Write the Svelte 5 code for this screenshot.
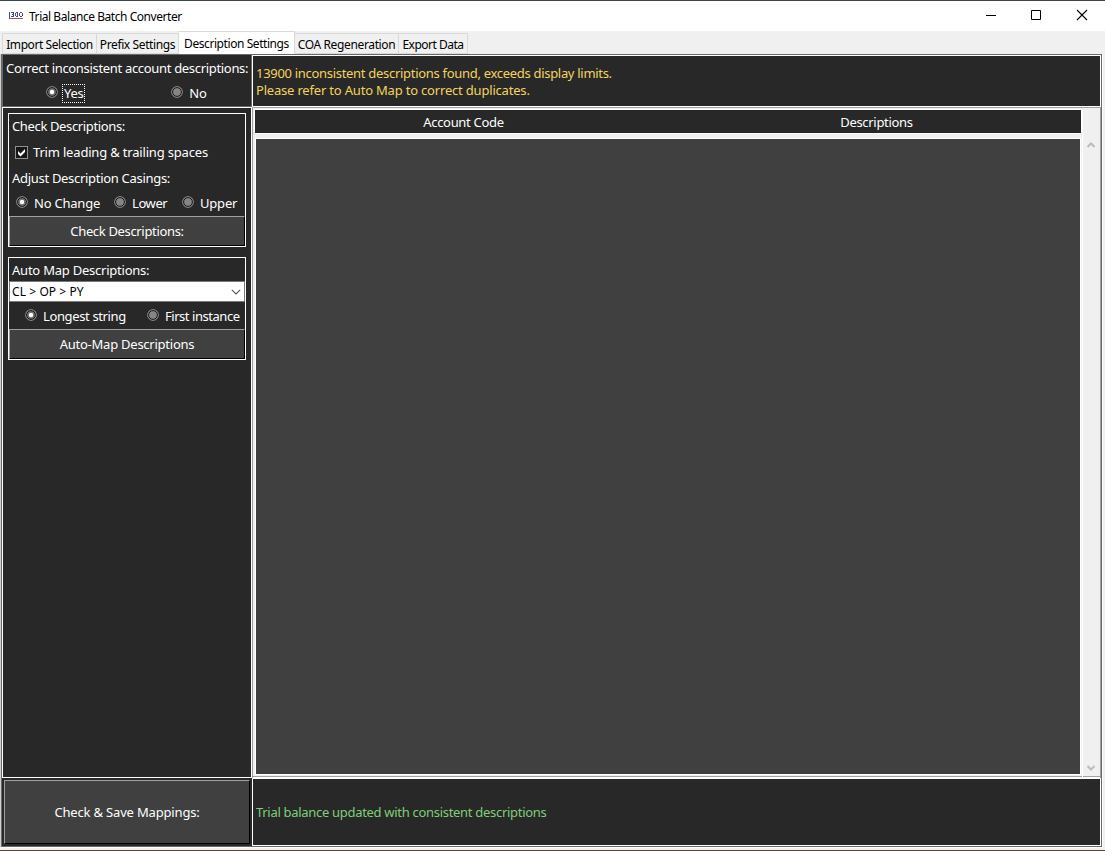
<script>
  const tabs = [
    { label: 'Import Selection', width: 95, spacing: -0.43 },
    { label: 'Prefix Settings', width: 82, spacing: -0.38 },
    { label: 'Description Settings', width: 116, spacing: -0.43 },
    { label: 'COA Regeneration', width: 104, spacing: -0.36 },
    { label: 'Export Data', width: 69, spacing: -0.5 },
  ];
  let active = $state(2);
  let correct = $state('Yes');
  let casing = $state('No Change');
  let method = $state('Longest string');
  let trim = $state(true);
</script>

{#snippet radio(label, on, pick, cls)}
  <button class="radio {cls}" onclick={pick}>
    <svg width="12" height="12" viewBox="0 0 12 12">
      <circle cx="6" cy="6" r="5.4" fill="#808080" stroke="#8c8c8c" stroke-width=".9" />
      <circle cx="6" cy="6" r="4.4" fill={on ? '#6f6f6f' : '#858585'} stroke="#181818" stroke-width="1" />
      {#if on}<circle cx="6" cy="6" r="2.2" fill="#fff" />{/if}
    </svg>
    <span>{label}</span>
  </button>
{/snippet}

<div class="window">
  <header>
    <svg class="logo" width="14" height="7" viewBox="0 0 14 7" fill="none" shape-rendering="crispEdges">
      <path d="M.5 0v6M2 .5h3M3 2.500h2M2 4.500h3M4.500 0v5M6.500 1v3M7 .5h2M7 4.500h2M8.500 1v4M10.500 1v3M11 .5h2M11 4.500h2M13.500 1v3" stroke="#454d94" />
      <path d="M0 6.500h14" stroke="#b24a55" />
    </svg>
    <h1><span>Trial Balance Batch Converter</span></h1>
    <svg class="controls" width="102" height="12" viewBox="0 0 102 12" fill="none" stroke="#000">
      <path d="M0 6.500h10M45.500 1.500h9v9h-9z" />
      <path d="M91 1l10 10M101 1l-10 10" stroke-width="1.1" />
    </svg>
  </header>

  <nav>
    {#each tabs as tab, i}
      <button class="tab" class:active={active === i} style:width="{tab.width}px" style:letter-spacing="{tab.spacing}px" onclick={() => (active = i)}><span>{tab.label}</span></button>
    {/each}
  </nav>

  <main>
    <section class="question">
      <p><span>Correct inconsistent account descriptions:</span></p>
      <div class="answers">
        {@render radio('Yes', correct === 'Yes', () => (correct = 'Yes'), 'focus')}
        {@render radio('No', correct === 'No', () => (correct = 'No'), '')}
      </div>
    </section>
    <section class="notice">
      <span class="n1">13900 inconsistent descriptions found, exceeds display limits.</span>
      <span class="n2">Please refer to Auto Map to correct duplicates.</span>
    </section>

    <aside>
      <div class="group check">
        <p class="l1"><span>Check Descriptions:</span></p>
        <button class="tick" onclick={() => (trim = !trim)}>
          <svg width="13" height="13" viewBox="0 0 13 13">
            <path d="M0 0h13v13H0z" fill="#909090" />
            <path d="M1 1h11v11H1z" fill="#161616" />
            {#if trim}<path d="M3 5v3l2.500 2.500L10 6V3L5.500 7.500z" fill="#fff" />{/if}
          </svg>
          <span>Trim leading &amp; trailing spaces</span>
        </button>
        <p class="l2"><span>Adjust Description Casings:</span></p>
        <div class="casings">
          {@render radio('No Change', casing === 'No Change', () => (casing = 'No Change'), 'c1')}
          {@render radio('Lower', casing === 'Lower', () => (casing = 'Lower'), 'c2')}
          {@render radio('Upper', casing === 'Upper', () => (casing = 'Upper'), 'c3')}
        </div>
        <button class="push"><span>Check Descriptions:</span></button>
      </div>
      <div class="group map">
        <p class="l3"><span>Auto Map Descriptions:</span></p>
        <div class="combo">
          <span>CL &gt; OP &gt; PY</span>
          <svg width="10" height="6" viewBox="0 0 10 6" fill="none" stroke="#555" stroke-width="1.1"><path d="M.8.8L5 5 9.200.8" /></svg>
        </div>
        <div class="methods">
          {@render radio('Longest string', method === 'Longest string', () => (method = 'Longest string'), 'm1')}
          {@render radio('First instance', method === 'First instance', () => (method = 'First instance'), 'm2')}
        </div>
        <button class="push auto"><span>Auto-Map Descriptions</span></button>
      </div>
    </aside>

    <section class="table">
      <div class="grid">
        <div class="head"><span>Account Code</span><span>Descriptions</span></div>
        <div class="body"></div>
      </div>
      <div class="scroll">
        <svg width="8" height="6" viewBox="0 0 8 6" fill="none" stroke="#bcbcbc" stroke-width="2"><path d="M.5 5L4 1.500 7.500 5" /></svg>
        <svg width="8" height="6" viewBox="0 0 8 6" fill="none" stroke="#bcbcbc" stroke-width="2"><path d="M.5 1L4 4.500 7.500 1" /></svg>
      </div>
    </section>

    <div class="save"><button class="push"><span>Check &amp; Save Mappings:</span></button></div>
    <section class="status"><span>Trial balance updated with consistent descriptions</span></section>
  </main>
</div>

<style>
  :global(body) { margin: 0; overflow: hidden; }
  .window, .window * { box-sizing: border-box; }
  .window {
    width: 1105px; height: 851px; background: #f0f0f0;
    border-top: 1px solid #3c4646; border-bottom: 1px solid #62403c;
    font: 13px/17px 'Noto Sans', sans-serif; color: #fff; letter-spacing: -.3px;
    display: flex; flex-direction: column; white-space: nowrap;
  }
  button { font: inherit; color: inherit; border: 0; padding: 0; margin: 0; background: none; letter-spacing: inherit; }
  p, h1 { margin: 0; font: inherit; }
  svg { display: block; flex: none; }
  header { height: 30px; flex: none; background: #fff; color: #000; display: flex; align-items: center; padding: 0 17px 0 9px; font-size: 12px; }
  h1 { margin-left: 6px; flex: 1; letter-spacing: -.45px; }
  .logo { margin-bottom: 2px; }
  .controls { margin-bottom: 2px; }
  nav { height: 23px; flex: none; display: flex; align-items: flex-end; padding-left: 2px; color: #000; font-size: 12px; }
  .tab { height: 21px; border: 1px solid #d9d9d9; border-left-width: 0; padding-top: 1px; background: #f0f0f0; }
  .tab:first-child { border-left-width: 1px; }
  .tab.active { height: 23px; background: #fff; padding: 1px 0 0; border-bottom-color: #fff; }
  main {
    width: 1101px; height: 793px; margin-left: 1px; flex: none; background: #fff;
    border: 1px solid #696969; box-shadow: -1px 0 #d0d0d0, 1px 1px #fff;
    display: grid; grid-template: 52px 671px 68px / 250px 849px;
  }
  .question { background: #282828; border-left: 1px solid #696969; border-right: 1px solid #696969; border-bottom: 1px solid #696969; padding: 5px 0 0 3px; }
  .question p { letter-spacing: -.32px; }
  .answers { display: flex; justify-content: space-between; padding: 6px 44.500px 0 40px; }
  .radio { display: flex; align-items: center; gap: 6px; height: 20px; }
  .radio svg { position: relative; top: -1px; }
  .focus { gap: 5px; }
  .focus span { outline: 1px dotted #fff; padding: 0 1px; }
  .notice { background: #282828; border: 1px solid #fff; padding: 9px 3px; color: #f2d45c; display: flex; flex-direction: column; }
  .n1 { letter-spacing: -.3px; }
  .n2 { letter-spacing: -.19px; }
  aside { background: #282828; border: 1px solid #fff; padding: 5px; display: flex; flex-direction: column; gap: 10px; }
  .group { border: 1px solid #fff; width: 238px; display: flex; flex-direction: column; }
  .check { height: 134px; }
  .map { height: 103px; }
  .group p { padding-left: 3px; }
  .l1 { padding-top: 4px; letter-spacing: -.36px; }
  .tick { display: flex; align-items: center; gap: 5px; height: 35px; padding-left: 6px; letter-spacing: -.18px; }
  .casings { display: flex; padding: 6px 7px 0 7px; height: 29px; }
  .c1 { width: 98px; letter-spacing: -.22px; }
  .c2 { width: 68px; letter-spacing: -.4px; }
  .c3 { letter-spacing: -.2px; }
  .push { background: #404040; border: 1px solid; border-color: #a0a0a0 #000 #000 #a0a0a0; width: 236px; height: 30px; flex: none; letter-spacing: -.34px; }
  .push.auto { letter-spacing: -.24px; }
  .l3 { padding-top: 4px; height: 23px; letter-spacing: -.23px; }
  .combo { height: 21px; background: #fff; border: 1px solid #7a7a7a; color: #000; font-size: 12px; letter-spacing: .08px; display: flex; align-items: center; justify-content: space-between; padding: 0 3px 0 2px; }
  .methods { display: flex; padding: 4px 4px 0 16px; height: 27px; letter-spacing: -.37px; }
  .m1 { width: 122px; }
  .m2 { letter-spacing: -.46px; }
  .table { border: 1px solid #a0a0a0; display: flex; background: #f0f0f0; padding: 2px 1px 1px; border-bottom: 0; box-shadow: inset 0 -1px #fff, inset 0 -2px #a0a0a0; }
  .grid { width: 828px; display: flex; flex-direction: column; gap: 6px; padding-left: 1px; }
  .head { width: 826px; height: 23px; background: #282828; box-shadow: 0 0 0 1px #fff; display: grid; grid-template-columns: 417px 409px; place-items: center; padding-top: 1px; }
  .body { width: 824px; height: 635px; margin-left: 1px; background: #404040; box-shadow: 0 0 0 1px #fff; }
  .scroll { flex: 1; display: flex; flex-direction: column; justify-content: space-between; align-items: center; padding: 32px 0 6px; border-left: 1px solid #fff; }
  .save { background: #282828; padding: 2px; }
  .save .push { width: 246px; height: 64px; letter-spacing: -.17px; }
  .status { background: #282828; border: 1px solid #fff; display: flex; align-items: center; padding-left: 3px; color: #7fce7a; }
</style>
